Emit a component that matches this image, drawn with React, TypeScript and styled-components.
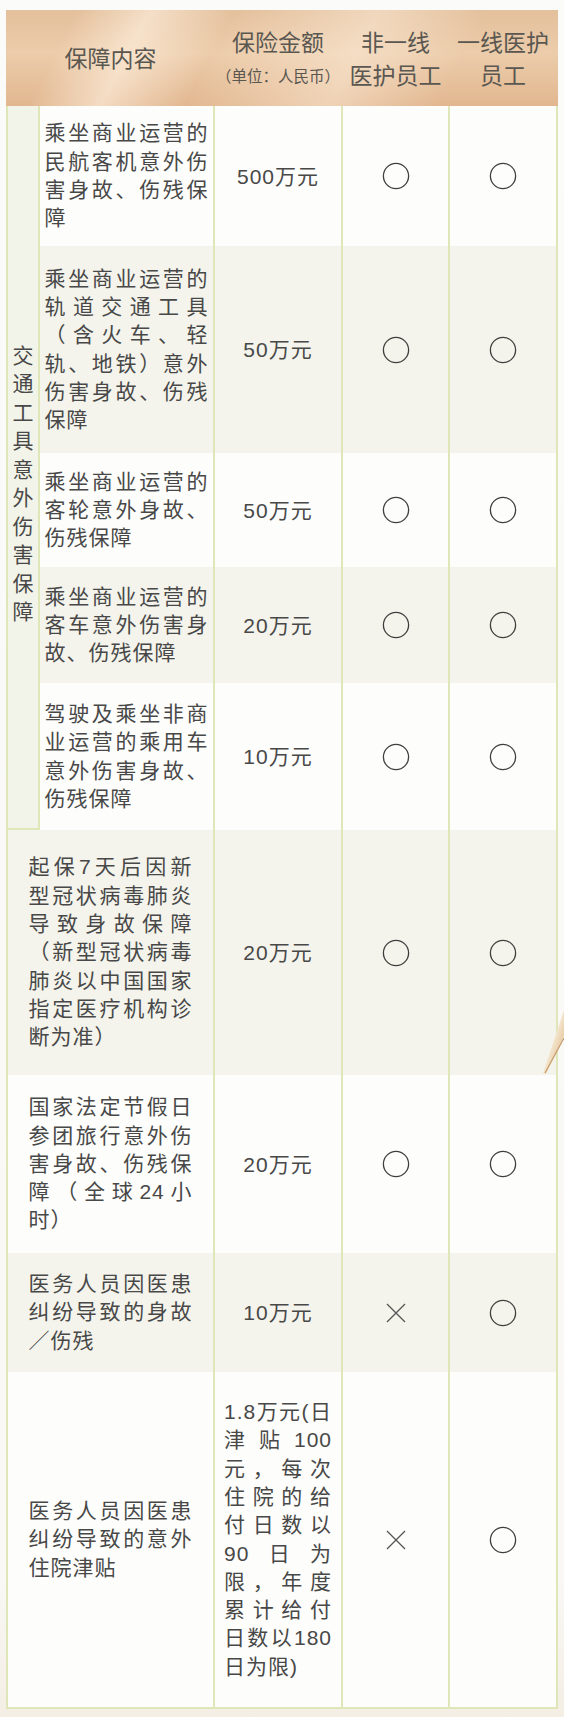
import styled, { createGlobalStyle } from 'styled-components';

type Mark = 'o' | 'x';

interface Item {
  desc: string;
  amount: string;
  first: Mark;
  second: Mark;
}

const transport: Item[] = [
  { desc: '乘坐商业运营的民航客机意外伤害身故、伤残保障', amount: '500万元', first: 'o', second: 'o' },
  { desc: '乘坐商业运营的轨道交通工具（含火车、轻轨、地铁）意外伤害身故、伤残保障', amount: '50万元', first: 'o', second: 'o' },
  { desc: '乘坐商业运营的客轮意外身故、伤残保障', amount: '50万元', first: 'o', second: 'o' },
  { desc: '乘坐商业运营的客车意外伤害身故、伤残保障', amount: '20万元', first: 'o', second: 'o' },
  { desc: '驾驶及乘坐非商业运营的乘用车意外伤害身故、伤残保障', amount: '10万元', first: 'o', second: 'o' },
];

const others: Item[] = [
  { desc: '起保7天后因新型冠状病毒肺炎导致身故保障（新型冠状病毒肺炎以中国国家指定医疗机构诊断为准）', amount: '20万元', first: 'o', second: 'o' },
  { desc: '国家法定节假日参团旅行意外伤害身故、伤残保障（全球24小时）', amount: '20万元', first: 'o', second: 'o' },
  { desc: '医务人员因医患纠纷导致的身故／伤残', amount: '10万元', first: 'x', second: 'o' },
  { desc: '医务人员因医患纠纷导致的意外住院津贴', amount: '1.8万元(日津贴100元，每次住院的给付日数以90日为限，年度累计给付日数以180日为限)', first: 'x', second: 'o' },
];

const COLS = '30px 173px 126px 105px 106px';
const LINE = '#dfe7b9';

const GlobalStyle = createGlobalStyle`
  html, body {
    margin: 0;
    padding: 0;
  }
  body {
    background: #faf9f6;
    font-family: "Liberation Sans", "Noto Sans CJK SC", sans-serif;
    color: #484848;
  }
`;

const Page = styled.div`
  position: relative;
  width: 564px;
  height: 1717px;
  box-sizing: border-box;
  padding: 10px 6px 8px;
  overflow: hidden;
  background: linear-gradient(180deg, #fbfbfa 0%, #f9f8f5 92%, #f4eee4 100%);
`;

const Head = styled.div`
  display: grid;
  grid-template-columns: ${COLS};
  column-gap: 2px;
  padding: 3px 2px 0;
  height: 96px;
  box-sizing: border-box;
  align-items: center;
  background:
    linear-gradient(118deg, rgba(255, 245, 232, 0) 12%, rgba(255, 243, 228, 0.6) 24%, rgba(255, 245, 232, 0) 38%, rgba(255, 243, 228, 0.45) 62%, rgba(255, 245, 232, 0) 80%),
    linear-gradient(180deg, #e4c09c 0%, #ecccaa 45%, #e2b790 100%);
`;

const HeadCell = styled.div<{ $span?: number }>`
  grid-column: span ${(p) => p.$span ?? 1};
  display: flex;
  flex-direction: column;
  align-items: center;
  font-size: 23px;
  line-height: 33px;
  color: #5a5751;
  white-space: nowrap;
`;

const Unit = styled.span`
  font-size: 15.5px;
`;

const Body = styled.div`
  display: grid;
  grid-template-columns: ${COLS};
  grid-template-rows: 140px 207px 114px 116px 147px 245px 178px 119px 335px;
  column-gap: 2px;
  padding: 0 2px 2px;
  background: ${LINE};
`;

const Cell = styled.div<{ $tint: boolean; $span?: number }>`
  grid-column: span ${(p) => p.$span ?? 1};
  display: flex;
  align-items: center;
  justify-content: center;
  min-width: 0;
  background: ${(p) => (p.$tint ? '#f4f4ec' : '#fdfdfb')};
`;

const GroupCell = styled.div`
  grid-row: span 5;
  display: flex;
  justify-content: center;
  align-items: center;
  padding-top: 34px;
  box-sizing: border-box;
  background: #f3f4e9;
  border-bottom: 2px solid ${LINE};
`;

const GroupText = styled.p`
  margin: 0;
  width: 21px;
  font-size: 21px;
  line-height: 28.5px;
  text-align: center;
`;

const Desc = styled.p`
  margin: 0;
  width: 164px;
  font-size: 21px;
  line-height: 28.3px;
  letter-spacing: 1px;
  text-align: justify;
`;

const Amount = styled.p<{ $long?: boolean }>`
  margin: 0;
  font-size: 21px;
  line-height: 28.3px;
  letter-spacing: 1px;
  text-align: ${(p) => (p.$long ? 'justify' : 'center')};
  width: ${(p) => (p.$long ? '108px' : 'auto')};
  padding-top: ${(p) => (p.$long ? '0' : '2px')};
`;

const Ribbon = styled.svg`
  position: absolute;
  right: 0;
  top: 1000px;
  width: 32px;
  height: 80px;
  pointer-events: none;
`;

const Symbol = ({ mark }: { mark: Mark }) =>
  mark === 'o' ? (
    <svg width="28" height="28" viewBox="0 0 28 28">
      <circle cx="14" cy="14" r="12.6" fill="none" stroke="#3f3f3f" strokeWidth="1.3" />
    </svg>
  ) : (
    <svg width="22" height="22" viewBox="0 0 22 22">
      <path d="M2 2 L20 20 M20 2 L2 20" stroke="#555" strokeWidth="1.3" fill="none" />
    </svg>
  );

const Row = ({ item, tint, wide }: { item: Item; tint: boolean; wide?: boolean }) => (
  <>
    <Cell $tint={tint} $span={wide ? 2 : 1}>
      <Desc>{item.desc}</Desc>
    </Cell>
    <Cell $tint={tint}>
      <Amount $long={item.amount.length > 8}>{item.amount}</Amount>
    </Cell>
    <Cell $tint={tint}>
      <Symbol mark={item.first} />
    </Cell>
    <Cell $tint={tint}>
      <Symbol mark={item.second} />
    </Cell>
  </>
);

export default function App() {
  return (
    <Page>
      <GlobalStyle />
      <Head>
        <HeadCell $span={2}>保障内容</HeadCell>
        <HeadCell>
          <span>保险金额</span>
          <Unit>（单位：人民币）</Unit>
        </HeadCell>
        <HeadCell>
          <span>非一线</span>
          <span>医护员工</span>
        </HeadCell>
        <HeadCell>
          <span>一线医护</span>
          <span>员工</span>
        </HeadCell>
      </Head>
      <Body>
        <GroupCell>
          <GroupText>交通工具意外伤害保障</GroupText>
        </GroupCell>
        {transport.map((item, i) => (
          <Row key={item.desc} item={item} tint={i % 2 === 1} />
        ))}
        {others.map((item, i) => (
          <Row key={item.desc} item={item} tint={i % 2 === 0} wide />
        ))}
      </Body>
      <Ribbon viewBox="0 0 32 80">
        <defs>
          <linearGradient id="rib" x1="0" y1="0" x2="1" y2="1">
            <stop offset="0" stopColor="#fdf9f2" stopOpacity="0" />
            <stop offset="0.45" stopColor="#f6ead6" />
            <stop offset="0.8" stopColor="#e3c296" />
            <stop offset="1" stopColor="#b98c5c" />
          </linearGradient>
        </defs>
        <path d="M32 10 L32 36 L14 74 L11 73 Z" fill="url(#rib)" />
        <path d="M32 38 L13 73" stroke="#c59a6a" strokeWidth="1.2" fill="none" />
      </Ribbon>
    </Page>
  );
}
